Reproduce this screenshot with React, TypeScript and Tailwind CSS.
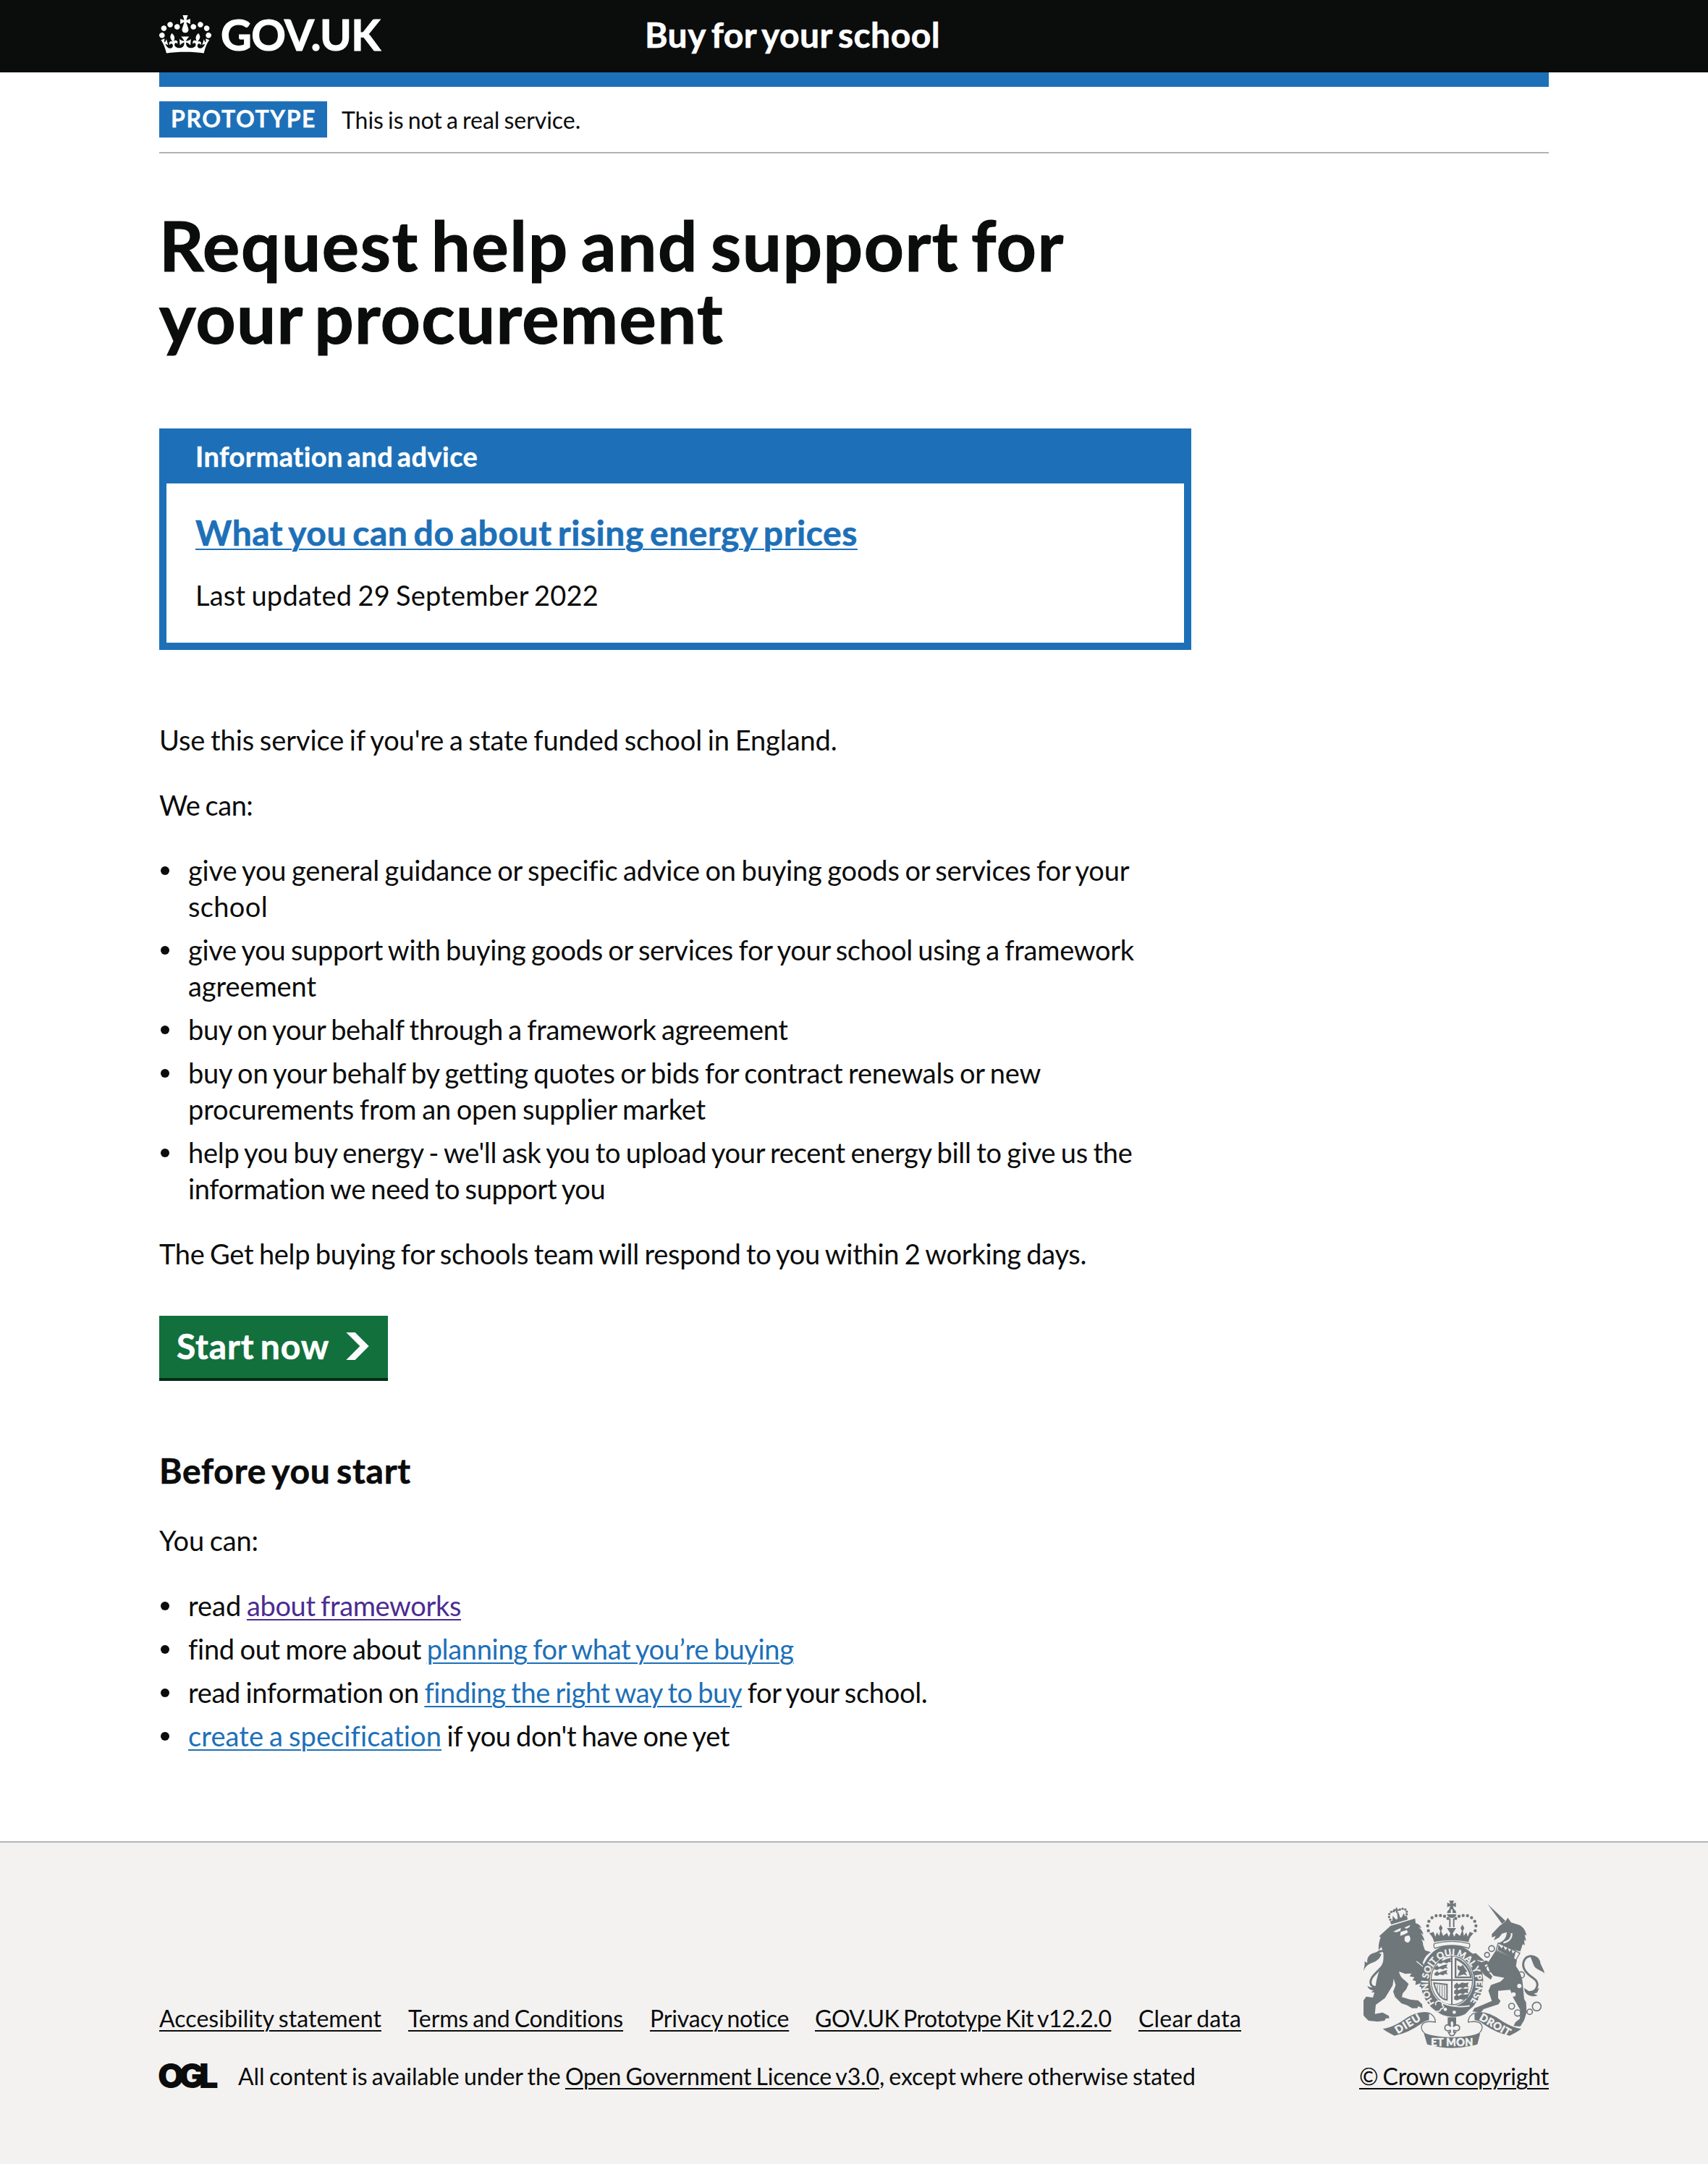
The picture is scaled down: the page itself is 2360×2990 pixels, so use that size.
import type { ReactNode } from 'react';

const crownPath =
  'M25 30.2c3.5 1.5 7.7-.2 9.1-3.7 1.5-3.6-.2-7.8-3.9-9.2-3.6-1.4-7.6.3-9.1 3.9-1.4 3.5.3 7.5 3.9 9zM9 39.5c3.6 1.5 7.8-.2 9.2-3.7 1.5-3.6-.2-7.8-3.9-9.1-3.6-1.5-7.6.2-9.1 3.8-1.4 3.5.3 7.5 3.8 9zM4.4 57.2c3.5 1.5 7.7-.2 9.1-3.8 1.5-3.6-.2-7.7-3.9-9.1-3.5-1.5-7.6.3-9.1 3.8-1.4 3.5.3 7.6 3.9 9.1zm38.3-21.4c3.5 1.5 7.7-.2 9.1-3.8 1.5-3.6-.2-7.7-3.9-9.1-3.6-1.5-7.6.3-9.1 3.8-1.3 3.6.4 7.7 3.9 9.1zm64.4-5.6c-3.6 1.5-7.8-.2-9.1-3.7-1.5-3.6.2-7.8 3.8-9.2 3.6-1.4 7.7.3 9.2 3.9 1.3 3.5-.4 7.5-3.9 9zm15.9 9.3c-3.6 1.5-7.7-.2-9.1-3.7-1.5-3.6.2-7.8 3.7-9.1 3.6-1.5 7.7.2 9.2 3.8 1.5 3.5-.3 7.5-3.8 9zm4.7 17.7c-3.6 1.5-7.8-.2-9.2-3.8-1.5-3.6.2-7.7 3.9-9.1 3.6-1.5 7.7.3 9.2 3.8 1.3 3.5-.4 7.6-3.9 9.1zM89.3 35.8c-3.6 1.5-7.8-.2-9.2-3.8-1.4-3.6.2-7.7 3.9-9.1 3.6-1.5 7.7.3 9.2 3.8 1.4 3.6-.3 7.7-3.9 9.1zM69.7 17.7l8.9 4.7V9.3l-8.9 2.8c-.2-.3-.5-.6-.9-.9L72.4 0H59.6l3.5 11.2c-.3.3-.6.5-.9.9l-8.8-2.8v13.1l8.8-4.7c.3.3.6.7.9.9l-5 15.4v.1c-.2.8-.4 1.6-.4 2.4 0 4.1 3.1 7.5 7 8.1h.2c.3 0 .7.1 1 .1.4 0 .7 0 1-.1h.2c4-.6 7.1-4.1 7.1-8.1 0-.8-.1-1.7-.4-2.4V34l-5.1-15.4c.4-.2.7-.6 1-.9zM66 92.8c16.9 0 32.8 1.1 47.1 3.2 4-16.9 8.9-26.7 14-33.5l-9.6-3.4c1 4.9 1.1 7.2 0 10.2-1.5-1.4-3-4.3-4.2-8.7L108.6 76c2.8-2 5-3.2 7.5-3.3-4.4 9.4-10 11.9-13.6 11.2-4.3-.8-6.3-4.6-5.6-7.9 1-4.7 5.7-5.9 8-.5 4.3-8.7-3-11.4-7.6-8.8 7.1-7.2 7.9-13.5 2.1-21.1-8 6.1-8.1 12.3-4.5 20.8-4.7-5.4-12.1-2.5-9.5 6.2 3.4-5.2 7.9-2 7.2 3.1-.6 4.3-6.4 7.8-13.5 7.2-10.3-.9-10.9-8-11.2-13.8 2.5-.5 7.1 1.8 11 7.3L80.2 60c-4.1 4.4-8 5.3-12.3 5.4 1.4-4.4 8-11.6 8-11.6H55.5s6.4 7.2 7.9 11.6c-4.2-.1-8-1-12.3-5.4l1.4 16.4c3.9-5.5 8.5-7.7 10.9-7.3-.3 5.8-.9 12.8-11.1 13.8-7.2.6-12.9-2.9-13.5-7.2-.7-5 3.8-8.3 7.1-3.1 2.7-8.7-4.6-11.6-9.4-6.2 3.7-8.5 3.6-14.7-4.6-20.8-5.8 7.6-5 13.9 2.2 21.1-4.7-2.6-11.9.1-7.7 8.8 2.3-5.5 7.1-4.2 8.1.5.7 3.3-1.3 7.1-5.7 7.9-3.5.7-9-1.8-13.5-11.2 2.5.1 4.7 1.3 7.5 3.3l-4.7-15.4c-1.2 4.4-2.7 7.2-4.3 8.7-1.1-3-.9-5.3 0-10.2l-9.5 3.4c5 6.9 9.9 16.7 14 33.5 14.8-2.1 30.8-3.2 47.7-3.2z';

const crownBeads: [number, number][] = [
  [371, 203], [368, 183], [373, 164], [386, 149], [403, 141], [421, 140], [438, 143], [452, 152],
  [565, 203], [568, 183], [563, 164], [550, 149], [533, 141], [515, 140], [498, 143], [484, 152],
];
const lionBeads: [number, number][] = [
  [213, 157], [208, 146], [209, 134], [217, 125], [227, 122], [253, 115], [264, 112], [275, 115], [281, 124], [281, 135], [277, 146],
];
const chain: [number, number, number][] = [
  [633, 277, 12], [614, 303, 10], [622, 361, 13], [756, 386, 13], [716, 516, 12], [741, 544, 13], [791, 539, 11], [820, 517, 18],
];

function Crest() {
  const g = '#6f777b';
  const bg = '#f3f2f1';
  return (
    <svg viewBox="102 78 750 612" className="block h-[204px] w-[250px]" fill={g} aria-hidden="true">
      {/* lion */}
      <path d="M214 183l102-31 2 20c10 2 18 8 24 20l-12-3c12 8 18 18 20 30l-12-7c10 10 15 22 17 34l-14-8c6 8 8 16 8 24l8 22 24 8c-14 8-22 18-28 30l-6 14 22 36c6 18 6 34 2 52l-18 14-20-4 8-14-24 8 2-16-14-4 8-12-20-4 8-12-26 2-26-10c4 18 12 28 24 36l16 16-10 22-14 16-4 16 34 10 34 4 16 16 2 16-18-8-4 8-22 0-20-12-24-8-26-26-8-22 10-28-8-26-4 28-32 52-38 28-4 38 32-6 26 14 2 10-14 0-6 10-28 4-38-4-18-18-6-10 0-52 14-20 28 4 8-26c4-30 8-56 16-78l18-44c4-28 2-44-8-62l-10 14c-2-22 2-36 8-54l-6-4z" />
      <path d="M225 207l32-16-2 12-16 6zM272 190l24-11-4 9-12 7zM256 208l26-8 4 10-14 8-18 6z" fill={bg} />
      <path d="M273 228q12-8 20-4q8 18-4 27q-12 4-17-8z" fill={bg} />
      <path d="M322 330l34 28 22 40" fill="none" stroke={bg} strokeWidth="4" />
      <path d="M212 164l5 13 68-20-2-12-8 1-6-16-8 17-7 2-7-22-6 3 3 24-8 2-13-15-1 20z" />
      <path d="M226 113l9 1 1-7h6l0 8 8-1v7l-7 0 1 8h-7l-1-8-9 2z" />
      {lionBeads.map(([x, y]) => <circle key={`${x}-${y}`} cx={x} cy={y} r="5" />)}
      <path d="M186 424C150 452 116 430 138 396C156 370 204 340 200 306C197 284 172 282 158 296" fill="none" stroke={g} strokeWidth="9" />
      <path d="M102 370c4-20 6-28 4-40l12 6c-4-24 12-40 40-44l18 8c-6 20-22 32-44 38-14 6-24 16-30 32z" />
      <path d="M118 432c12 8 26 8 40 0l32-10-6 20-28 18-22-2 10-8c-12 0-22-6-26-18z" />

      {/* unicorn */}
      <path d="M617 93l74 70-15 11z" />
      <path d="M690 165l10-16 14 20 34 10c18 10 26 24 30 44l-8-4 6 26-8-4 2 22-8-4-10 30c-30-6-60-18-92-34 22-8 34-20 36-46l-20 6-12 16-22 12 8-18-16 6 0-14 32-34z" />
      <path d="M716 213c2 22-12 34-34 40" fill="none" stroke={bg} strokeWidth="6" />
      <path d="M660 254l90 42-16 28-82-40z" fill={bg} stroke={g} strokeWidth="4" />
      <path d="M658 282l4-22 12 16 8-10 8 18 10-12 6 18 10-12 4 20 14-14-8 36z" />
      <path d="M650 286l88 38-4 26c16 22 26 44 28 72l6 64 8 14 2 42-10 32-16 26-28-2 8-16 18-14 2-36-28-48-14-36-50 4 0 30 10 12-8 14-62 20-12 14-34-4 8-14 26-10 46-20-14-42 10-24 40-14 16-16-44-8-18-22-6-18-8-22c-14 2-28 0-40-6l-16-10-20 4-2-10 12-6 24-4 28 26 20 16z" />
      <path d="M612 326l-20 8-14-6 4 30 22 30 26 18 6-14-18-20-14-26 24-8z" />
      <path d="M782 464C824 456 836 420 806 400C776 380 754 356 768 326C776 308 796 304 812 312" fill="none" stroke={g} strokeWidth="9" />
      <path d="M792 306c28-2 42 12 44 34l14 30 2 10c-12-14-38-14-46-38z" />
      <path d="M768 440l20 14 20-4 22-10-8 20-14 4 16 8c-22 8-44 0-54-18z" />
      <circle cx="748" cy="432" r="9" fill={bg} />
      <circle cx="724" cy="467" r="9" fill={bg} />
      {chain.map(([x, y, r]) => <circle key={`${x}-${y}`} cx={x} cy={y} r={r} fill="none" stroke={g} strokeWidth="5" />)}

      {/* imperial crown */}
      <path d="M457 78h20l-5 14 13-6v20l-13-6 5 15h-20l5-15-13 6V86l13 6z" />
      <path d="M448 130q2-14 16-18v18zM471 112q14 4 16 18h-16zM447 135h41q-6 15-20 15t-21-15z" />
      <path d="M457 152h6v36h-6zM473 152h6v36h-6z" />
      {crownBeads.map(([x, y]) => <circle key={`${x}-${y}`} cx={x} cy={y} r="6.5" />)}
      <path d="M376 214l16-6 8 20 6-18 10 14 4-20-6-12 8-14 8 14-6 12 8 20 16-12 8 16 6-14-14-22h38l-14 22 6 14 8-16 16 12 8-20-6-12 8-14 8 14-6 12 4 20 10-14 6 18 8-20 16 6q-18 16-20 36-70-14-144 0-4-22-20-36z" />

      {/* garter */}
      <ellipse cx="468" cy="409" rx="130" ry="147" />
      <path d="M396 256q72-18 144 0q6 10-2 20q-70-24-140 0q-8-10-2-20z" fill={bg} stroke={g} strokeWidth="4" />
      <ellipse cx="468" cy="409" rx="91" ry="106" fill={bg} />
      <ellipse cx="468" cy="409" rx="86" ry="101" fill="none" stroke={g} strokeWidth="4" />
      <path id="motto" d="M397 503A99 116 0 1 1 537 506" fill="none" />
      <text fontSize="38" fontWeight="700" fill={bg} stroke={bg} strokeWidth="1.2" fontFamily="Lato, sans-serif">
        <textPath href="#motto" textLength="505">HONI SOIT QUI MAL Y PENSE</textPath>
      </text>
      <path d="M465 308h6v202h-6zM382 404h172v7H382z" />
      {[330, 356, 380].map((y) => (
        <path key={y} d={`M${y < 340 ? 412 : 396} ${y}l12-10 6 8 12-6 12-4 12-2-4 10 6 8-12-2-8 6-14-4-10 6-12-2z`} />
      ))}
      {[428, 452, 476].map((y) => (
        <path key={y} d={`M478 ${y}l12-10 6 8 14-8 14 2 14-2-4 12 4 8-14-2-8 6-14-4-12 6-12-4z`} />
      ))}
      <path d="M480 316h8q50 20 62 76v8h-70zM487 325v68h56q-10-46-56-68z" fillRule="evenodd" />
      <path d="M492 346l12 6 10-8 8 14 10 14-8 4 8 14-14-6-12 4-14 4 4-12 6-10-10-8z" />
      <path d="M394 420l54 6v64q-38-4-54-70z" fill="none" stroke={g} strokeWidth="6" />
      <path d="M408 428v24M418 428v40M428 428v50M438 428v58" stroke={g} strokeWidth="3" />
      <path d="M398 508q14-20 34 0l-12 10q50 30 118 16l-14 14q-26 14-56 12-44-2-62-26-16-8-8-26z" />
      <path d="M430 502q50 24 112 12" fill="none" stroke={bg} strokeWidth="5" />
      <path d="M402 512q-6-16 12-18 18 0 14 16 14 12-6 18-2 12-16 8" fill="none" stroke={bg} strokeWidth="5" />
      <circle cx="441" cy="529" r="7" fill={bg} />
      <circle cx="478" cy="541" r="7" fill={bg} />

      {/* motto scroll */}
      <path d="M451 562h35v32h-35z" />
      <path d="M468 572q14 14 6 28 20-14 26 2 2 14-12 16l-12-2v8l8 0-10 14h-12l-8-14 8 0v-8l-12 2q-14-4-10-18 6-14 24 0-8-14 4-28z" fill={bg} stroke={g} strokeWidth="5" />
      <path d="M182 610q40-6 82-34 60-44 110-34l24 36q-30-12-56 10-56 40-112 50-30-14-48-28z" />
      <path d="M756 610q-40-6-82-34-60-44-110-34l-24 36q30-12 56 10 56 40 112 50 30-14 48-28z" />
      <path d="M374 544q26 12 26 38-58-10-58 24 4 22 30 30M562 544q-26 12-26 38 58-10 58 24-4 22-30 30" fill={bg} stroke={g} strokeWidth="4" />
      <path d="M352 628q116 34 234 0l-12 46q-104 30-208 0z" />
      <g fill={bg} stroke={bg} strokeWidth="2" fontFamily="Lato, sans-serif" fontWeight="700" fontSize="43">
        <text transform="translate(244 631) rotate(-31)" textLength="114">DIEU</text>
        <text transform="translate(580 571) rotate(30)" textLength="140">DROIT</text>
        <text x="382" y="681" textLength="174">ET MON</text>
      </g>
    </svg>
  );
}

const underline = 'underline decoration-2 underline-offset-4';
const link = 'text-[#1d70b8] underline decoration-2 underline-offset-4';

function Bullet({ children }: { children: ReactNode }) {
  return (
    <li className="flex whitespace-pre">
      <span className="ml-[2px] mr-[26px] mt-[20px] size-3 shrink-0 rounded-full bg-[#0b0c0c]" />
      <div>{children}</div>
    </li>
  );
}

export default function App() {
  return (
    <div className="min-h-[2990px] bg-white font-['Lato',sans-serif] text-[38px] leading-[50px] text-[#0b0c0c] [word-spacing:-1.9px]">
      <header className="h-[100px] bg-[#0b0c0c] text-white">
        <div className="mx-auto flex w-[1920px] items-start">
          <svg viewBox="0 0 132 97" className="mt-[21px] h-[53px] w-[72px]" fill="currentColor" aria-hidden="true">
            <path fillRule="evenodd" d={crownPath} />
          </svg>
          <span className="ml-[13px] mt-[18px] w-[586px] text-[59px] font-bold leading-[60px] tracking-[-0.5px] [-webkit-text-stroke:1.2px]">GOV.UK</span>
          <span className="mt-[18px] text-[48px] font-bold leading-[60px] tracking-[0.44px] [-webkit-text-stroke:0.6px] [word-spacing:-4px]">Buy for your school</span>
        </div>
      </header>

      <div className="mx-auto w-[1920px]">
        <div className="h-5 bg-[#1d70b8]" />
        <div className="flex items-center gap-5 border-b-2 border-[#b1b4b6] py-5 text-[32px]">
          <strong className="h-[50px] w-[232px] bg-[#1d70b8] pl-4 leading-[48px] tracking-[1.58px] text-white [-webkit-text-stroke:0.4px]">PROTOTYPE</strong>
          <span className="leading-[47px] tracking-[-0.05px]">This is not a real service.</span>
        </div>

        <main className="w-[1426px]">
          <h1 className="mt-[76px] whitespace-pre text-[96px] font-bold leading-[100px] [-webkit-text-stroke:1.2px] [word-spacing:-8px]">
            <span className="tracking-[1.6px]">Request help and support for</span>
            <br />
            <span className="tracking-[1.34px]">your procurement</span>
          </h1>

          <section className="mt-[104px] border-x-10 border-b-10 border-[#1d70b8]">
            <h2 className="bg-[#1d70b8] px-10 pb-[13px] pt-[13px] font-bold tracking-[0.44px] text-white [-webkit-text-stroke:0.4px] [word-spacing:-4px]">
              Information and advice
            </h2>
            <div className="px-10 pb-[41px] pt-[38px]">
              <h3 className={`text-[48px] font-bold leading-[60px] tracking-[0.54px] [-webkit-text-stroke:0.6px] [word-spacing:-4px] ${link}`}>
                What you can do about rising energy prices
              </h3>
              <p className="mt-[31px] tracking-[0.23px]">Last updated 29 September 2022</p>
            </div>
          </section>

          <p className="mt-[99px] tracking-[-0.09px]">Use this service if you're a state funded school in England.</p>
          <p className="mt-10 tracking-[-0.5px]">We can:</p>
          <ul className="my-10 space-y-[10px]">
            <Bullet>
              <span className="tracking-[-0.17px]">give you general guidance or specific advice on buying goods or services for your</span>
              <br />
              <span className="tracking-[0.35px]">school</span>
            </Bullet>
            <Bullet>
              <span className="tracking-[-0.29px]">give you support with buying goods or services for your school using a framework</span>
              <br />
              <span className="tracking-[-0.08px]">agreement</span>
            </Bullet>
            <Bullet>
              <span className="tracking-[-0.34px]">buy on your behalf through a framework agreement</span>
            </Bullet>
            <Bullet>
              <span className="tracking-[-0.22px]">buy on your behalf by getting quotes or bids for contract renewals or new</span>
              <br />
              <span className="tracking-[-0.13px]">procurements from an open supplier market</span>
            </Bullet>
            <Bullet>
              <span className="tracking-[-0.28px]">help you buy energy - we'll ask you to upload your recent energy bill to give us the</span>
              <br />
              <span className="tracking-[-0.38px]">information we need to support you</span>
            </Bullet>
          </ul>
          <p className="tracking-[-0.28px]">The Get help buying for schools team will respond to you within 2 working days.</p>

          <button className="mt-[61px] flex h-[86px] w-[316px] items-center bg-[#12703c] pb-[2px] pl-6 text-[48px] font-bold text-white shadow-[0_4px_0_#002d18]">
            <span className="w-[234px] text-left tracking-[0.82px] [-webkit-text-stroke:0.6px] [word-spacing:-4px]">Start now</span>
            <svg viewBox="0 0 33 40" className="h-[38px] w-8" fill="currentColor" aria-hidden="true">
              <path d="M0 0h13l20 20-20 20H0l20-20z" />
            </svg>
          </button>

          <h2 className="mt-[98px] text-[48px] font-bold leading-[60px] tracking-[0.75px] [-webkit-text-stroke:0.6px] [word-spacing:-4px]">Before you start</h2>
          <p className="mt-[41px] tracking-[-0.11px]">You can:</p>
          <ul className="mt-10 space-y-[10px]">
            <Bullet>
              <span className="tracking-[-0.03px]">read </span>
              <a className="tracking-[-0.37px] text-[#4c2c92] underline decoration-2 underline-offset-4">about frameworks</a>
            </Bullet>
            <Bullet>
              <span className="tracking-[-0.27px]">find out more about </span>
              <a className={`tracking-[-0.32px] ${link}`}>planning for what you’re buying</a>
            </Bullet>
            <Bullet>
              <span className="tracking-[-0.33px]">read information on </span>
              <a className={`tracking-[-0.38px] ${link}`}>finding the right way to buy</a>
              <span className="tracking-[-0.3px]"> for your school.</span>
            </Bullet>
            <Bullet>
              <a className={`tracking-[0.1px] ${link}`}>create a specification</a>
              <span className="tracking-[-0.38px]"> if you don't have one yet</span>
            </Bullet>
          </ul>
        </main>
      </div>

      <footer className="mt-[121px] h-[446px] border-t-2 border-[#b1b4b6] bg-[#f3f2f1] text-[32px] leading-10">
        <div className="mx-auto flex h-[343px] w-[1920px] items-end justify-between">
          <div className="whitespace-pre">
            <div className="flex">
              <a className={`w-[344px] tracking-[0.06px] ${underline}`}>Accesibility statement</a>
              <a className={`w-[334px] tracking-[-0.13px] ${underline}`}>Terms and Conditions</a>
              <a className={`w-[228px] tracking-[-0.15px] ${underline}`}>Privacy notice</a>
              <a className={`w-[447px] tracking-[-0.5px] ${underline}`}>GOV.UK Prototype Kit v12.2.0</a>
              <a className={`tracking-[0.2px] ${underline}`}>Clear data</a>
            </div>
            <div className="mt-10 flex">
              <span className="-ml-[2px] w-[111px] font-['Inter',sans-serif] text-[47px] font-black leading-[38px] tracking-[-7.5px]">OGL</span>
              <span className="tracking-[-0.03px]">All content is available under the </span>
              <a className={`tracking-[-0.17px] ${underline}`}>Open Government Licence v3.0</a>
              <span className="tracking-[-0.07px]">, except where otherwise stated</span>
            </div>
          </div>
          <div className="flex flex-col items-end">
            <div className="mr-[6px]">
              <Crest />
            </div>
            <a className={`mt-[19px] tracking-[-0.15px] ${underline}`}>© Crown copyright</a>
          </div>
        </div>
      </footer>
    </div>
  );
}
